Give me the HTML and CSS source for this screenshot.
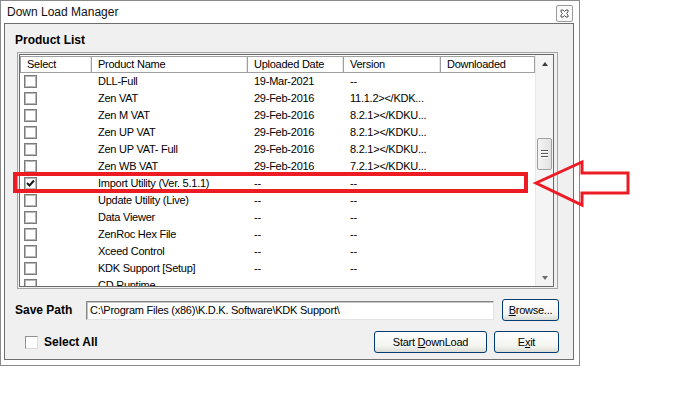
FILE: index.html
```html
<!DOCTYPE html>
<html lang="en">
<head>
    <meta charset="UTF-8">
    <meta name="viewport" content="width=device-width, initial-scale=1.0">
    <title>Down Load Manager</title>
    <link rel="stylesheet" href="styles.css">
</head>
<body>

<div class="window">
    <div class="titlebar">
        <span class="title">Down Load Manager</span>
        <span class="close">
            <svg width="9" height="9" viewBox="0 0 9 9"><path d="M1 1h2l1.5 1.5L6 1h2v2L6.5 4.5 8 6v2H6L4.5 6.5 3 8H1V6l1.5-1.5L1 3z" fill="none" stroke="#555" stroke-width="1"/></svg>
        </span>
    </div>

    <div class="client">
        <div class="group-label">Product List</div>

        <div class="list">
            <div class="view">
                <div class="table">
                    <div class="head">
                        <div class="hcell">Select</div>
                        <div class="hcell">Product Name</div>
                        <div class="hcell">Uploaded Date</div>
                        <div class="hcell">Version</div>
                        <div class="hcell">Downloaded</div>
                    </div>
                    <div class="row"><div class="chk"><span class="box"></span></div><div>DLL-Full</div><div>19-Mar-2021</div><div>--</div><div></div></div>
                    <div class="row"><div class="chk"><span class="box"></span></div><div>Zen VAT</div><div>29-Feb-2016</div><div>11.1.2&gt;&lt;/KDK...</div><div></div></div>
                    <div class="row"><div class="chk"><span class="box"></span></div><div>Zen M VAT</div><div>29-Feb-2016</div><div>8.2.1&gt;&lt;/KDKU...</div><div></div></div>
                    <div class="row"><div class="chk"><span class="box"></span></div><div>Zen UP VAT</div><div>29-Feb-2016</div><div>8.2.1&gt;&lt;/KDKU...</div><div></div></div>
                    <div class="row"><div class="chk"><span class="box"></span></div><div>Zen UP VAT- Full</div><div>29-Feb-2016</div><div>8.2.1&gt;&lt;/KDKU...</div><div></div></div>
                    <div class="row"><div class="chk"><span class="box"></span></div><div>Zen WB VAT</div><div>29-Feb-2016</div><div>7.2.1&gt;&lt;/KDKU...</div><div></div></div>
                    <div class="row"><div class="chk"><span class="box"><svg width="11" height="11" viewBox="0 0 11 11"><path d="M2 5l2.5 2.5L9 2.5" fill="none" stroke="#1a1a1a" stroke-width="2"/></svg></span></div><div>Import Utility (Ver. 5.1.1)</div><div>--</div><div>--</div><div></div></div>
                    <div class="row"><div class="chk"><span class="box"></span></div><div>Update Utility (Live)</div><div>--</div><div>--</div><div></div></div>
                    <div class="row"><div class="chk"><span class="box"></span></div><div>Data Viewer</div><div>--</div><div>--</div><div></div></div>
                    <div class="row"><div class="chk"><span class="box"></span></div><div>ZenRoc Hex File</div><div>--</div><div>--</div><div></div></div>
                    <div class="row"><div class="chk"><span class="box"></span></div><div>Xceed Control</div><div>--</div><div>--</div><div></div></div>
                    <div class="row"><div class="chk"><span class="box"></span></div><div>KDK Support [Setup]</div><div>--</div><div>--</div><div></div></div>
                    <div class="row"><div class="chk"><span class="box"></span></div><div>CD Runtime</div><div>--</div><div>--</div><div></div></div>
                </div>
                <div class="scroll">
                    <div class="sbtn"><span class="arrow-up"></span></div>
                    <div class="track">
                        <div class="thumb"><span></span><span></span><span></span></div>
                    </div>
                    <div class="sbtn"><span class="arrow-down"></span></div>
                </div>
            </div>
        </div>

        <div class="save-row">
            <span class="label">Save Path</span>
            <div class="path">C:\Program Files (x86)\K.D.K. Software\KDK Support\</div>
            <button class="btn btn-browse"><u>B</u>rowse...</button>
        </div>

        <div class="bottom-row">
            <span class="box flat"></span>
            <span class="label">Select All</span>
            <button class="btn btn-start">Start <u>D</u>ownLoad</button>
            <button class="btn btn-exit">E<u>x</u>it</button>
        </div>
    </div>
</div>

<!-- red callout drawn over the screenshot -->
<svg class="callout" width="679" height="398" viewBox="0 0 679 398">
    <rect x="15" y="174" width="511" height="17" fill="none" stroke="#ed1c24" stroke-width="4"/>
    <path d="M536 183L582 162V173H628V193H582V205Z" fill="none" stroke="#ed1c24" stroke-width="3" stroke-linejoin="miter"/>
</svg>

</body>
</html>
```

FILE: styles.css
```css
body { margin: 0; background: #fff; font-family: 'Liberation Sans', Arial, sans-serif; font-size: 11px; color: #000; position: relative; width: 679px; height: 398px; overflow: hidden; }

.window { width: 580px; height: 366px; box-sizing: border-box; border: 1px solid #8a8a8a; background: #fff; }
.titlebar { height: 22px; display: flex; justify-content: space-between; align-items: flex-start; }
.title { font-size: 12px; line-height: 22px; padding-left: 6px; color: #111; }
.close { width: 15px; height: 15px; margin: 4px 6px 0 0; border: 1px solid #9a9a9a; border-radius: 2px; display: flex; align-items: center; justify-content: center; background: #fafafa; }

.client { width: 570px; height: 337px; box-sizing: border-box; margin-left: 3px; border: 1px solid #6e6e6e; background: #f0f0f0; padding: 0 14px 0 10px; }
.group-label { font-weight: bold; font-size: 12px; line-height: 16px; margin-top: 8px; }

.list { width: 541px; height: 237px; box-sizing: border-box; margin: 4px 0 0 2px; border: 1px solid #a5a5a5; padding: 1px 3px 1px 1px; background: #f0f0f0; }
.view { height: 100%; box-sizing: border-box; border: 1px solid #6a6a6a; background: #fff; display: flex; }
.table { flex: 1; overflow: hidden; letter-spacing: -0.25px; }

.head, .row { display: grid; grid-template-columns: 71px 156px 96px 97px 1fr; }
.head { height: 17px; margin-top: 1px; box-sizing: border-box; border-top: 1px solid #a0a0a0; border-bottom: 1px solid #a0a0a0; }
.hcell { border-left: 1px solid #a0a0a0; border-right: 1px solid #e4e4e4; padding-left: 6px; line-height: 15px; white-space: nowrap; }
.hcell:last-child { border-right: 1px solid #a0a0a0; }
.row { height: 17px; line-height: 17px; white-space: nowrap; }
.row > div { padding-left: 7px; overflow: hidden; }
.row > .chk { padding-left: 4px; display: flex; align-items: center; }

.box { width: 13px; height: 13px; box-sizing: border-box; border: 1px solid #7c7c7c; box-shadow: inset 0 0 0 1px #b8b8b8; background: #fff; display: flex; align-items: center; justify-content: center; }
.box.flat { box-shadow: none; border-color: #8f8f8f #dadada #dadada #8f8f8f; }

.scroll { width: 17px; display: flex; flex-direction: column; background: #f4f4f4; border-left: 1px solid #e8e8e8; }
.sbtn { height: 17px; display: flex; align-items: center; justify-content: center; }
.arrow-up { width: 0; height: 0; border-left: 3px solid transparent; border-right: 3px solid transparent; border-bottom: 4px solid #3c3c3c; }
.arrow-down { width: 0; height: 0; border-left: 3px solid transparent; border-right: 3px solid transparent; border-top: 4px solid #6c6c6c; }
.track { flex: 1; padding-top: 66px; }
.thumb { width: 15px; height: 32px; margin-left: 1px; box-sizing: border-box; border: 1px solid #9e9e9e; border-radius: 2px; background: linear-gradient(to right, #f4f4f4, #e2e2e2); display: flex; flex-direction: column; align-items: center; justify-content: center; gap: 1px; }
.thumb span { width: 7px; height: 1px; background: #555; border-bottom: 1px solid #fff; }

.save-row { display: flex; align-items: center; height: 22px; margin-top: 10px; }
.save-row .label { width: 71px; }
.label { font-weight: bold; font-size: 12px; }
.path { width: 408px; height: 19px; box-sizing: border-box; background: #fff; border: 1px solid; border-color: #868686 #e3e3e3 #e3e3e3 #868686; box-shadow: inset 1px 1px 0 #c4c4c4; padding-left: 3px; line-height: 16px; letter-spacing: -0.25px; white-space: nowrap; overflow: hidden; }

.btn { font-family: 'Liberation Sans', Arial, sans-serif; font-size: 11px; letter-spacing: -0.25px; color: #000; height: 22px; padding: 0; border: 1px solid #003c74; border-radius: 3px; background: linear-gradient(#ffffff, #f4f4f0 70%, #dcdcd6); }
.btn u { text-decoration: underline; }
.btn-browse { width: 57px; margin-left: 8px; }

.bottom-row { display: flex; align-items: center; height: 22px; margin-top: 10px; }
.bottom-row .box { margin-left: 10px; }
.bottom-row .label { margin-left: 6px; }
.btn-start { width: 113px; margin-left: auto; }
.btn-exit { width: 65px; margin-left: 7px; }

.callout { position: absolute; top: 0; left: 0; pointer-events: none; }
```
